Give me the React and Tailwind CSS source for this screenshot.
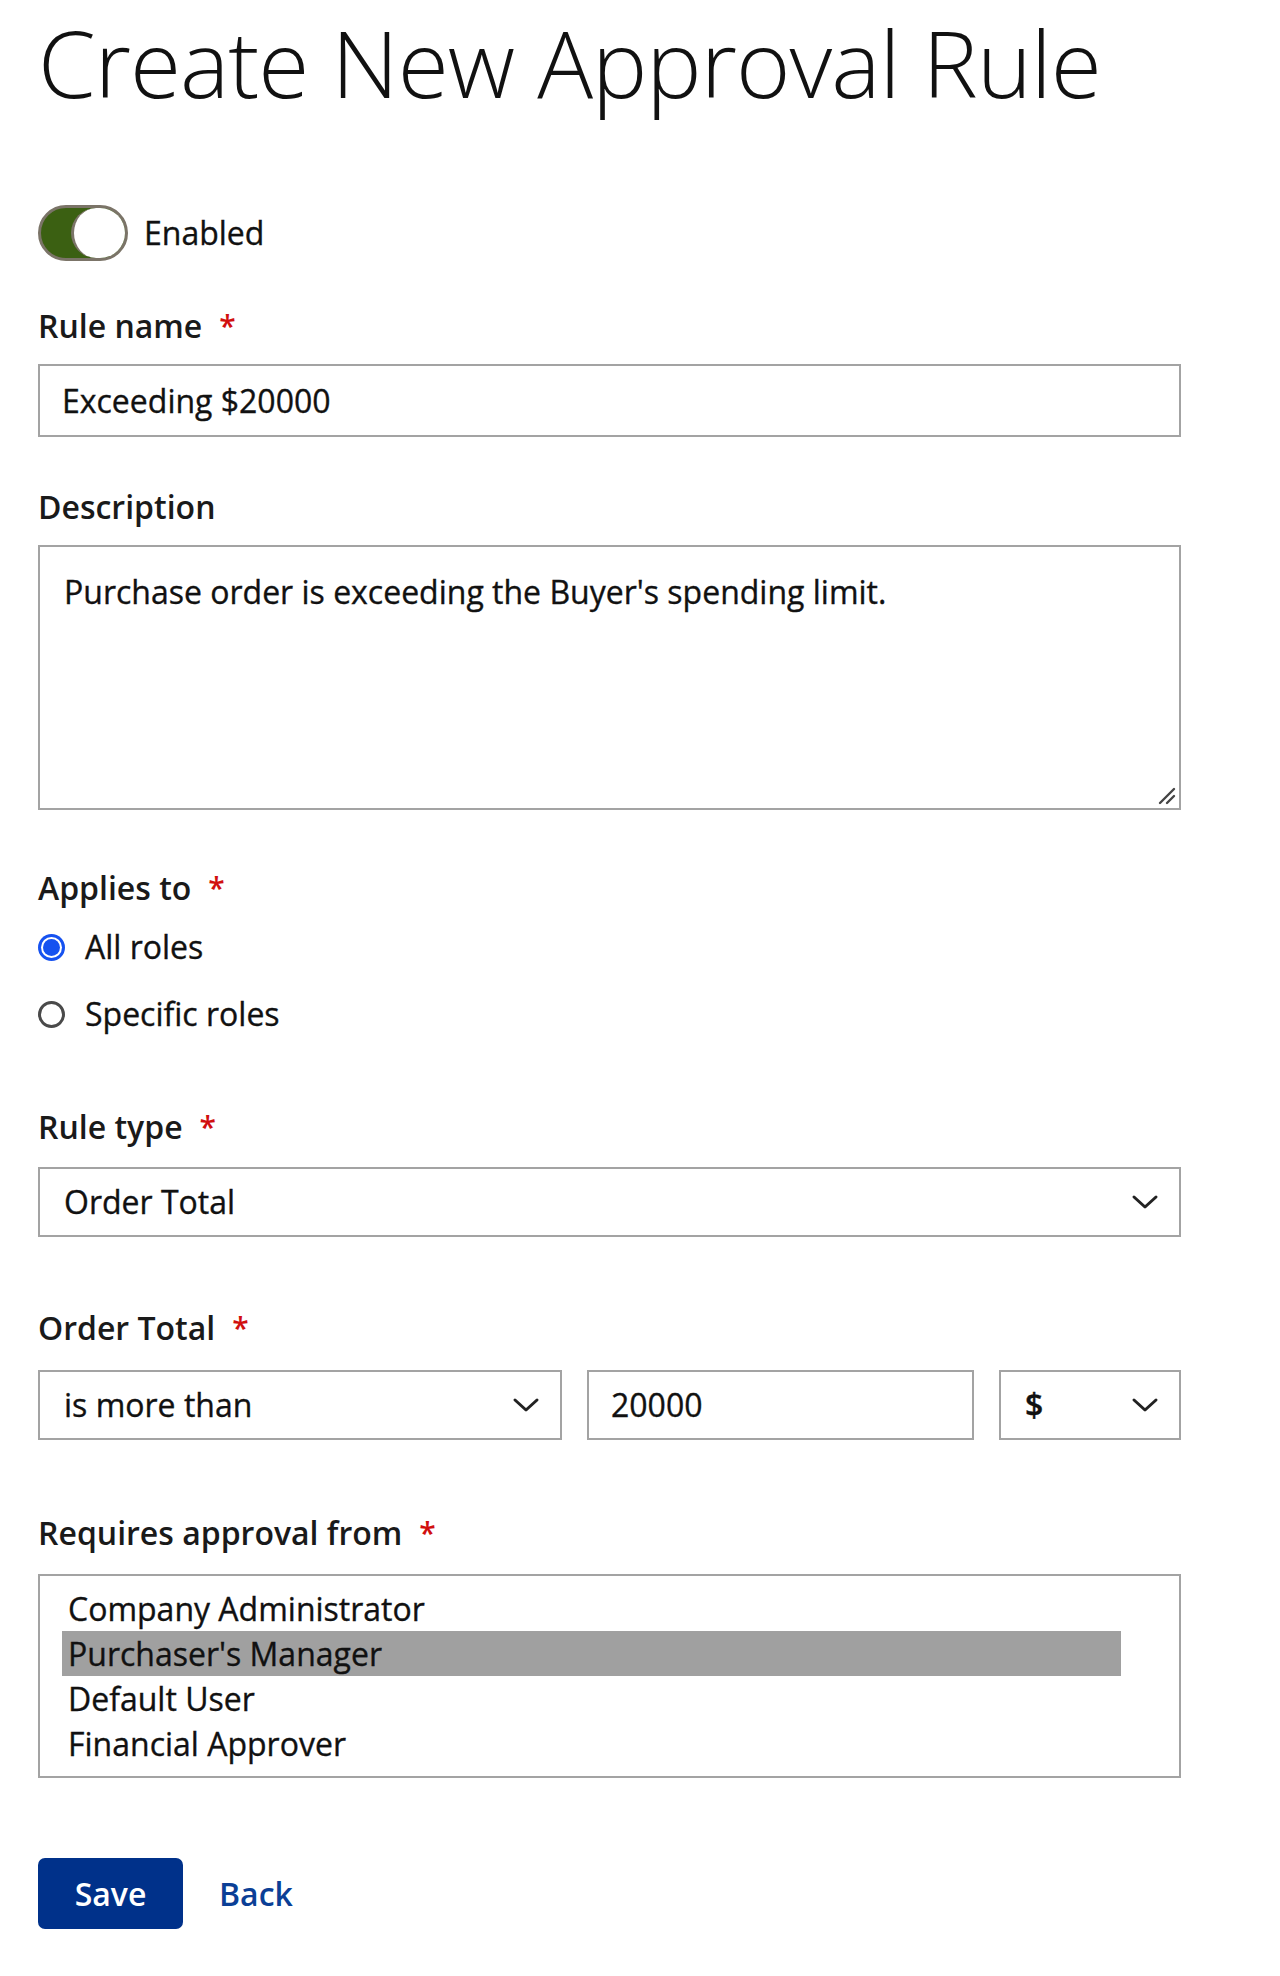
const font = { fontFamily: "'Open Sans', 'Noto Sans', sans-serif" };

function Label({ children, required }) {
  return (
    <div className="flex items-center gap-[17px] text-[32px] font-semibold text-[#1a1a1a] leading-none h-[40px]">
      <span>{children}</span>
      {required && <span className="text-[#d10f0f] text-[30px]">*</span>}
    </div>
  );
}

function Box({ className = "", children }) {
  return (
    <div className={`border-2 border-[#a3a3a3] bg-white flex items-center ${className}`}>
      {children}
    </div>
  );
}

function Chevron() {
  return (
    <svg width="28" height="16" viewBox="0 0 28 16" className="shrink-0">
      <path d="M3 3 L14 13 L25 3" fill="none" stroke="#222" strokeWidth="3" strokeLinecap="round" strokeLinejoin="round" />
    </svg>
  );
}

const body = "text-[32px] text-[#111] [-webkit-text-stroke:0.35px_#111]";

function Select({ value, className = "" }) {
  return (
    <Box className={`h-[70px] justify-between pl-[24px] pr-[20px] ${className}`}>
      <span className={body}>{value}</span>
      <Chevron />
    </Box>
  );
}

function Radio({ checked, label }) {
  return (
    <div className="flex items-center gap-[20px] h-[40px]">
      {checked ? (
        <span className="w-[27px] h-[27px] rounded-full bg-[#1652f0] flex items-center justify-center">
          <span className="w-[17px] h-[17px] rounded-full bg-[#1652f0] ring-2 ring-white" />
        </span>
      ) : (
        <span className="w-[27px] h-[27px] rounded-full border-[3px] border-[#4a4a4a]" />
      )}
      <span className={body}>{label}</span>
    </div>
  );
}

export default function App() {
  return (
    <div className="bg-white min-h-[1976px] pl-[38px] w-[1181px]" style={font}>
      <h1 className="text-[93px] font-light text-[#111] leading-none pt-[16px] tracking-[-1px]">
        Create New Approval Rule
      </h1>

      {/* toggle */}
      <div className="flex items-center gap-[16px] mt-[96px]">
        <div className="w-[90px] h-[56px] rounded-full bg-[#3b6012] border-[3px] border-[#7b7468] flex justify-end">
          <div className="w-[54px] h-full rounded-full bg-white border-l-[3px] border-[#7b7468]" />
        </div>
        <span className={body}>Enabled</span>
      </div>

      <div className="mt-[45px]">
        <Label required>Rule name</Label>
      </div>
      <Box className="h-[73px] mt-[18px] px-[22px]">
        <span className={body}>Exceeding $20000</span>
      </Box>

      <div className="mt-[50px]">
        <Label>Description</Label>
      </div>
      <Box className="h-[265px] mt-[18px] items-start relative">
        <p className={`${body} px-[24px] pt-[26px] leading-[38px]`}>
          Purchase order is exceeding the Buyer's spending limit.
        </p>
        <svg className="absolute right-[3px] bottom-[3px]" width="18" height="18" viewBox="0 0 18 18">
          <path d="M2 16 L16 2 M9 16 L16 9" stroke="#444" strokeWidth="2.4" strokeLinecap="round" />
        </svg>
      </Box>

      <div className="mt-[58px]">
        <Label required>Applies to</Label>
      </div>
      <div className="mt-[19px] flex flex-col gap-[27px]">
        <Radio checked label="All roles" />
        <Radio label="Specific roles" />
      </div>

      <div className="mt-[73px]">
        <Label required>Rule type</Label>
      </div>
      <Select value="Order Total" className="mt-[20px]" />

      <div className="mt-[71px]">
        <Label required>Order Total</Label>
      </div>
      <div className="mt-[22px] flex gap-[25px]">
        <Select value="is more than" className="w-[524px]" />
        <Box className="h-[70px] w-[387px] px-[22px]">
          <span className={body}>20000</span>
        </Box>
        <Select value="$" className="w-[182px] font-semibold" />
      </div>

      <div className="mt-[73px]">
        <Label required>Requires approval from</Label>
      </div>
      <Box className="h-[204px] mt-[21px] items-start">
        <ul className={`${body} w-full pt-[10px] pl-[22px] pr-[58px] leading-[45px]`}>
          <li className="px-[6px]">Company Administrator</li>
          <li className="px-[6px] bg-[#a0a0a0]">Purchaser's Manager</li>
          <li className="px-[6px]">Default User</li>
          <li className="px-[6px]">Financial Approver</li>
        </ul>
      </Box>

      <div className="mt-[80px] flex items-center gap-[36px]">
        <button className="w-[145px] h-[71px] rounded-[7px] bg-[#00318a] text-white text-[32px] font-semibold">
          Save
        </button>
        <a className="text-[32px] font-semibold text-[#0b3f96]">Back</a>
      </div>
    </div>
  );
}
